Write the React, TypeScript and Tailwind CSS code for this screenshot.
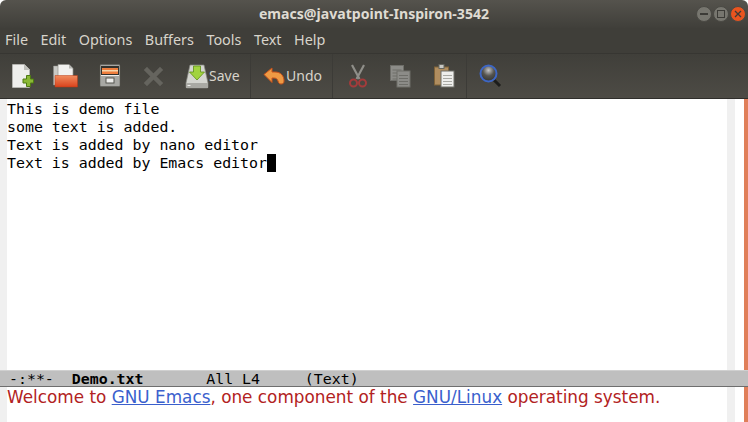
import React from "react";

const Sep = () => <div className="w-px self-stretch bg-[#3c3b37]" />;

const NewIcon = () => (
  <svg width="22" height="24" viewBox="0 0 22 24">
    <path d="M0.500 0.500h12l5 5v18h-17z" fill="#eeeeec" stroke="#cfcfcb" strokeWidth="0.500" />
    <path d="M12 0.500l5.500 5.500h-5.500z" fill="#bdbdb8" />
    <path d="M12 15h3.500v-3.500h4V15H22.500v4h-3v3.500h-4V19H12z" transform="translate(-1 0)" fill="#8ab836" stroke="#4e7a12" strokeWidth="1" />
  </svg>
);
const OpenIcon = () => (
  <svg width="25" height="24" viewBox="0 0 25 24">
    <defs>
      <linearGradient id="fo" x1="0" y1="0" x2="0" y2="1">
        <stop offset="0" stopColor="#f08c5e" />
        <stop offset="1" stopColor="#d9421c" />
      </linearGradient>
    </defs>
    <path d="M0.500 2h6v19h-6z" fill="#c9c9c5" stroke="#8f8f8a" strokeWidth="0.500" />
    <path d="M5 0.500h11l4 4V14H5z" fill="#f1f1ef" stroke="#8f8f8a" strokeWidth="0.700" />
    <path d="M16 0.500l4 4h-4z" fill="#b8b8b4" />
    <path d="M2 11.500h22.500V23H2z" fill="url(#fo)" stroke="#b93a14" strokeWidth="0.500" />
  </svg>
);
const CabinetIcon = () => (
  <svg width="22" height="24" viewBox="0 0 22 24">
    <rect x="1" y="0.500" width="20" height="22" rx="1" fill="#a8a8a4" stroke="#55554f" strokeWidth="0.500" />
    <rect x="2" y="2" width="18" height="9" fill="#33322e" />
    <rect x="3" y="4" width="16" height="6" fill="#ee7d3c" />
    <rect x="3" y="6" width="16" height="1.500" fill="#f6d4a8" />
    <rect x="2" y="11" width="18" height="1" fill="#eeeeec" />
    <rect x="7" y="14" width="8" height="5" fill="#eeeeec" stroke="#55554f" strokeWidth="1" />
  </svg>
);
const StopIcon = () => (
  <svg width="19" height="19" viewBox="0 0 19 19">
    <path d="M3 3l13 13M16 3L3 16" stroke="#65645e" strokeWidth="4.500" strokeLinecap="square" />
  </svg>
);
const SaveIcon = () => (
  <svg width="24" height="25" viewBox="0 0 24 25">
    <path d="M5 1h14l4 18v4a1 1 0 0 1-1 1H2a1 1 0 0 1-1-1v-4z" fill="#d4d5d0" stroke="#85857f" strokeWidth="0.700" />
    <rect x="1" y="19" width="22" height="5" fill="#a9a9a4" />
    <rect x="2.500" y="21" width="3" height="1" fill="#eeeeec" />
    <path d="M8.500 2h7v6h4l-7.500 8L4.500 8h4z" fill="#a1d33f" stroke="#5e8f17" strokeWidth="0.800" />
  </svg>
);
const UndoIcon = () => (
  <svg width="22" height="18" viewBox="0 0 22 18">
    <path d="M1 7.500L9 1v4h3c6 0 9 4 9 9 0 2-1 3-3 3-2 0-2.500-1.500-3-3-.5-2-2-3-4-3H9v4.500z" fill="#ee9a44" stroke="#c9531b" strokeWidth="1" strokeLinejoin="round" />
  </svg>
);
const CutIcon = () => (
  <svg width="18" height="24" viewBox="0 0 18 24">
    <path d="M3 1l7.500 14M15 1L7.500 15" stroke="#8f8e89" strokeWidth="2.200" />
    <circle cx="4.500" cy="19" r="3.500" fill="none" stroke="#a33b3b" strokeWidth="2" />
    <circle cx="13.500" cy="19" r="3.500" fill="none" stroke="#a33b3b" strokeWidth="2" />
  </svg>
);
const Page = ({ x, y, w, h, fill, lines }: { x: number; y: number; w: number; h: number; fill: string; lines: string }) => (
  <g>
    <rect x={x} y={y} width={w} height={h} fill={fill} stroke="#6e6e69" strokeWidth="1" />
    {[4, 7, 10, 13].map((d) => (
      <rect key={d} x={x + 2} y={y + d} width={w - 4} height="1" fill={lines} />
    ))}
  </g>
);
const CopyIcon = () => (
  <svg width="21" height="23" viewBox="0 0 21 23">
    <Page x={0.5} y={0.5} w={13} h={15} fill="#8c8c88" lines="#6e6e69" />
    <Page x={7} y={6} w={13} h={16} fill="#8c8c88" lines="#6e6e69" />
  </svg>
);
const PasteIcon = () => (
  <svg width="21" height="24" viewBox="0 0 21 24">
    <rect x="0.500" y="3" width="14" height="18" fill="#b08d5f" stroke="#7f6238" />
    <rect x="5" y="0.500" width="5" height="4" fill="#c8c8c4" stroke="#66665f" />
    <Page x={7} y={7} w={13} h={16} fill="#eeeeec" lines="#a9a9a4" />
  </svg>
);
const FindIcon = () => (
  <svg width="23" height="24" viewBox="0 0 23 24">
    <defs>
      <radialGradient id="gl" cx="0.500" cy="0.300" r="0.700">
        <stop offset="0" stopColor="#c6c6c6" />
        <stop offset="0.500" stopColor="#55544f" />
        <stop offset="1" stopColor="#33332f" />
      </radialGradient>
    </defs>
    <path d="M15 16l6 6" stroke="#1d1d1b" strokeWidth="3" />
    <circle cx="9.500" cy="9.500" r="8" fill="url(#gl)" stroke="#3d66c4" strokeWidth="2" />
  </svg>
);

const menus = ["File", "Edit", "Options", "Buffers", "Tools", "Text", "Help"];
const lines = [
  "This is demo file",
  "some text is added.",
  "Text is added by nano editor",
];

export default function App() {
  return (
    <div className="w-[748px] h-[422px] flex flex-col overflow-hidden bg-white font-['Noto_Sans',sans-serif]">
      {/* title bar */}
      <div className="h-[28px] shrink-0 relative flex items-center justify-center bg-gradient-to-b from-[#55534d] to-[#403f3a] rounded-t-[6px]">
        <span className="text-[14.100px] font-bold text-[#dfdbd2]">emacs@javatpoint-Inspiron-3542</span>
        <div className="absolute right-[2px] top-[6px] flex gap-[1px]">
          <div className="w-[16px] h-[16px] rounded-full bg-[#77766f] flex items-center justify-center border border-[#4a4944]">
            <div className="w-[8px] h-[1.500px] bg-[#3c3b37]" />
          </div>
          <div className="w-[16px] h-[16px] rounded-full bg-[#77766f] flex items-center justify-center border border-[#4a4944]">
            <div className="w-[8px] h-[8px] border border-[#3c3b37]" />
          </div>
          <div className="w-[16px] h-[16px] rounded-full bg-[#e9541f] flex items-center justify-center border border-[#4a4944]">
            <svg width="8" height="8" viewBox="0 0 8 8">
              <path d="M1 1l6 6M7 1L1 7" stroke="#3c3b37" strokeWidth="1.300" />
            </svg>
          </div>
        </div>
      </div>
      {/* menu bar */}
      <div className="h-[26px] shrink-0 flex items-center gap-[12.500px] pl-[5px] pb-[1px] bg-[#3f3e39] border-b border-[#373632] text-[14.400px] text-[#d8d4cb]">
        {menus.map((m) => (
          <span key={m}>{m}</span>
        ))}
      </div>
      {/* toolbar */}
      <div className="h-[45px] shrink-0 flex items-center bg-gradient-to-b from-[#403f3a] to-[#4d4b45] border-b border-[#2f2e2b] text-[14px] text-[#d8d4cb]">
        <div className="flex items-center self-stretch pl-[12px]">
          <div className="w-[41px]"><NewIcon /></div>
          <div className="w-[46px]"><OpenIcon /></div>
          <div className="w-[44px]"><CabinetIcon /></div>
          <div className="w-[42px] pl-[1px]"><StopIcon /></div>
          <div className="flex items-center w-[65px]">
            <SaveIcon />
            <span className="pb-[1px]">Save</span>
          </div>
        </div>
        <Sep />
        <div className="flex items-center w-[81px] pl-[12px]">
          <UndoIcon />
          <span className="ml-[1px] pb-[1px]">Undo</span>
        </div>
        <Sep />
        <div className="flex items-center pl-[16px]">
          <div className="w-[41px]"><CutIcon /></div>
          <div className="w-[44px]"><CopyIcon /></div>
          <div className="w-[32px]"><PasteIcon /></div>
        </div>
        <Sep />
        <div className="pl-[12px]"><FindIcon /></div>
      </div>
      {/* editor */}
      <div className="flex-1 flex min-h-0">
        <div className="w-[7px] bg-[#f0f0f0]" />
        <div className="flex-1 font-['DejaVu_Sans_Mono',monospace] text-[14.900px] leading-[18px] text-black pt-[1px]">
          {lines.map((l) => (
            <div key={l} className="h-[18px]">{l}</div>
          ))}
          <div className="h-[18px] flex">
            <span>Text is added by Emacs editor</span>
            <span className="w-[9px] h-[18px] bg-black" />
          </div>
        </div>
        <div className="w-[8px] bg-[#f0f0f0]" />
        <div className="w-[9px]" />
        <div className="w-[4px] bg-[#e07f5a]" />
      </div>
      {/* mode line */}
      <div className="h-[17px] shrink-0 flex bg-[#bfbfbf] border-t border-[#d0d0d0] border-b border-b-[#6e6e6e] font-['DejaVu_Sans_Mono',monospace] text-[14.900px] leading-[17px] text-black whitespace-pre pl-[9px]">
        <span>-:**-  <b>Demo.txt</b>       All L4     (Text)</span>
      </div>
      {/* echo area */}
      <div className="h-[35px] shrink-0 flex">
        <div className="w-[7px] bg-[#f0f0f0]" />
        <div className="flex-1 font-['DejaVu_Sans',sans-serif] text-[16.850px] leading-[20px] text-[#b22222] whitespace-pre">
          Welcome to <span className="text-[#3a5fcd] underline">GNU Emacs</span>, one component of the{" "}
          <span className="text-[#3a5fcd] underline">GNU/Linux</span> operating system.
        </div>
        <div className="w-[8px] bg-[#f0f0f0]" />
        <div className="w-[9px]" />
        <div className="w-[4px] bg-[#e07f5a]" />
      </div>
    </div>
  );
}
